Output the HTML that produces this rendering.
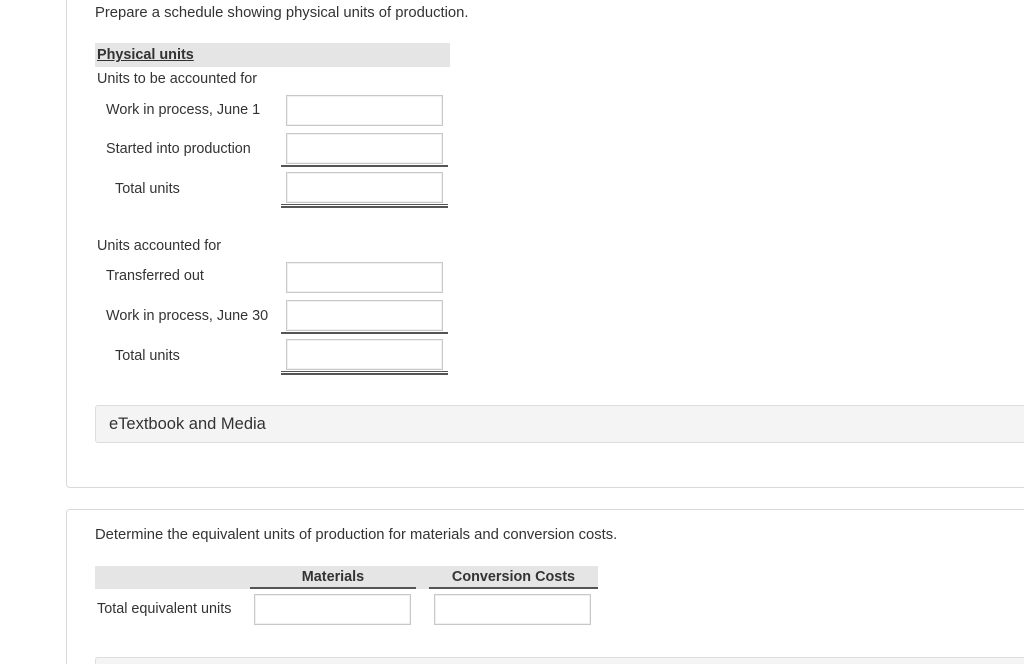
<!DOCTYPE html>
<html><head><meta charset="utf-8"><style>
html,body{margin:0;padding:0;width:1024px;height:664px;overflow:hidden;background:#fff;}
body{position:relative;font-family:"Liberation Sans",sans-serif;color:#333;font-size:14.4px;}
.a{position:absolute;white-space:nowrap;}
.card{position:absolute;border:1px solid #d9d9d9;border-radius:4px;background:#fff;}
.in{position:absolute;border:1px solid #c8c8c8;box-shadow:inset 0 0 0 1px #f0f0f0;background:#fff;width:155px;height:29px;}
.ln{position:absolute;height:2px;background:#555;}
</style></head><body>
<div class="card" style="left:66px;top:-10px;width:1000px;height:496px;"></div>
<div class="card" style="left:66px;top:509px;width:1000px;height:154px;border-bottom:none;border-radius:4px 4px 0 0;"></div>

<div class="a" style="left:95px;top:5px;font-size:14.8px;">Prepare a schedule showing physical units of production.</div>
<div class="a" style="left:95px;top:43px;width:355px;height:24px;background:#e5e5e5;"></div>
<div class="a" style="left:97px;top:47px;font-weight:bold;text-decoration:underline;">Physical units</div>
<div class="a" style="left:97px;top:71px;">Units to be accounted for</div>
<div class="a" style="left:106px;top:102px;">Work in process, June 1</div>
<div class="a" style="left:106px;top:141px;">Started into production</div>
<div class="a" style="left:115px;top:181px;">Total units</div>
<div class="in" style="left:286px;top:95px;"></div>
<div class="in" style="left:286px;top:133px;"></div>
<div class="ln" style="left:281px;top:165px;width:167px;"></div>
<div class="in" style="left:286px;top:172px;"></div>
<div class="ln" style="left:281px;top:204px;width:167px;height:1px;"></div>
<div class="ln" style="left:281px;top:206px;width:167px;"></div>

<div class="a" style="left:97px;top:238px;">Units accounted for</div>
<div class="a" style="left:106px;top:268px;">Transferred out</div>
<div class="a" style="left:106px;top:308px;">Work in process, June 30</div>
<div class="a" style="left:115px;top:348px;">Total units</div>
<div class="in" style="left:286px;top:262px;"></div>
<div class="in" style="left:286px;top:300px;"></div>
<div class="ln" style="left:281px;top:332px;width:167px;"></div>
<div class="in" style="left:286px;top:339px;"></div>
<div class="ln" style="left:281px;top:371px;width:167px;height:1px;"></div>
<div class="ln" style="left:281px;top:373px;width:167px;"></div>

<div class="a" style="left:95px;top:405px;width:940px;height:36px;background:#f4f4f4;border:1px solid #ddd;border-radius:3px;"></div>
<div class="a" style="left:109px;top:415px;font-size:16.5px;">eTextbook and Media</div>

<div class="a" style="left:95px;top:527px;font-size:14.8px;">Determine the equivalent units of production for materials and conversion costs.</div>
<div class="a" style="left:95px;top:566px;width:503px;height:23px;background:#e5e5e5;"></div>
<div class="a" style="left:250px;top:569px;width:166px;text-align:center;font-weight:bold;">Materials</div>
<div class="a" style="left:429px;top:569px;width:169px;text-align:center;font-weight:bold;">Conversion Costs</div>
<div class="ln" style="left:250px;top:587px;width:166px;"></div>
<div class="ln" style="left:429px;top:587px;width:169px;"></div>
<div class="a" style="left:97px;top:601px;">Total equivalent units</div>
<div class="in" style="left:254px;top:594px;"></div>
<div class="in" style="left:434px;top:594px;"></div>
<div class="a" style="left:95px;top:657px;width:940px;height:6px;background:#f4f4f4;border:1px solid #ddd;border-bottom:none;border-radius:3px 3px 0 0;"></div>
</body></html>
